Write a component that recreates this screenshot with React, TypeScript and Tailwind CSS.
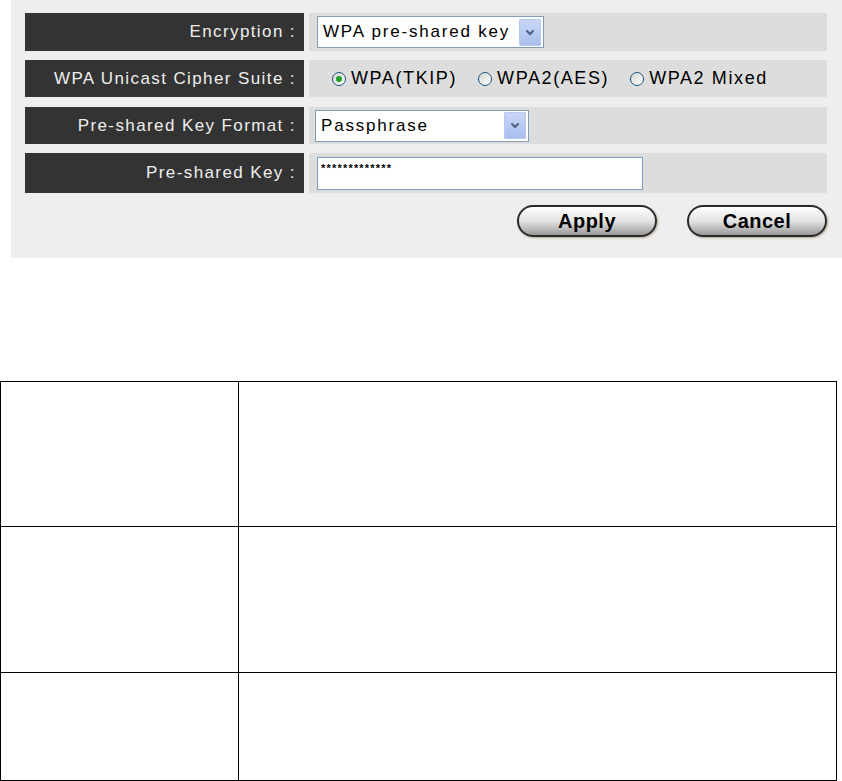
import React from 'react'

const font = { fontFamily: '"Liberation Sans", Arial, sans-serif' }

function Label({ text }: { text: string }) {
  return (
    <div className="w-[279px] shrink-0 bg-[#333333] text-[#eeeeee] text-[17px] tracking-[1.4px] flex items-center justify-end pr-[8px]">
      {text}
    </div>
  )
}

function Arrow() {
  return (
    <div className="w-[22px] h-[27px] my-auto mr-[2px] bg-gradient-to-b from-[#c9d6f7] to-[#a9bff0] flex items-center justify-center border border-[#b8c8ee] rounded-[1px]">
      <svg width="10" height="7" viewBox="0 0 10 7">
        <path d="M1.5 1.5 L5 5 L8.5 1.5" stroke="#4d6185" strokeWidth="2" fill="none" />
      </svg>
    </div>
  )
}

function Select({ value, width }: { value: string; width: string }) {
  return (
    <div className={`${width} h-[32px] bg-white border border-[#7f9db9] flex items-stretch`}>
      <span className="flex-1 pl-[5px] text-[17px] tracking-[1.8px] text-black flex items-center">{value}</span>
      <Arrow />
    </div>
  )
}

function Radio({ label, checked }: { label: string; checked?: boolean }) {
  return (
    <span className="flex items-center gap-[5px] text-[18px] tracking-[1.6px] text-black">
      <span className="w-[14px] h-[14px] rounded-full border border-[#1c5180] bg-gradient-to-br from-[#d6d6d0] to-white flex items-center justify-center">
        {checked && <span className="w-[6px] h-[6px] rounded-full bg-[#21a121]" />}
      </span>
      {label}
    </span>
  )
}

function PillButton({ text }: { text: string }) {
  return (
    <button className="w-[140px] h-[32px] rounded-full border-[2px] border-[#2a2a2a] bg-gradient-to-b from-[#ffffff] via-[#e4e4e4] to-[#9a9a9a] shadow-[1px_1px_2px_#b8a898] text-[20px] tracking-[0.5px] font-bold text-black flex items-center justify-center">
      {text}
    </button>
  )
}

export default function App() {
  return (
    <div className="w-[842px] h-[781px] bg-white" style={font}>
      <div className="ml-[11px] h-[258px] bg-[#eeeeee] pt-[13px] pl-[14px] pr-[15px]">
        <div className="flex gap-[5px] h-[38px] mb-[9px]">
          <Label text="Encryption :" />
          <div className="flex-1 bg-[#dddddd] flex items-center pl-[8px]">
            <Select value="WPA pre-shared key" width="w-[227px]" />
          </div>
        </div>
        <div className="flex gap-[5px] h-[37px] mb-[10px]">
          <Label text="WPA Unicast Cipher Suite :" />
          <div className="flex-1 bg-[#dddddd] flex items-center pl-[23px] gap-[21px]">
            <Radio label="WPA(TKIP)" checked />
            <Radio label="WPA2(AES)" />
            <Radio label="WPA2 Mixed" />
          </div>
        </div>
        <div className="flex gap-[5px] h-[37px] mb-[9px]">
          <Label text="Pre-shared Key Format :" />
          <div className="flex-1 bg-[#dddddd] flex items-center pl-[6px]">
            <Select value="Passphrase" width="w-[214px]" />
          </div>
        </div>
        <div className="flex gap-[5px] h-[40px]">
          <Label text="Pre-shared Key :" />
          <div className="flex-1 bg-[#dddddd] flex items-center pl-[8px]">
            <div className="w-[326px] h-[33px] bg-white border border-[#7f9db9] pl-[3px] pt-[4px] text-[11px] leading-[12px] font-bold text-black tracking-[1.2px]">
              *************
            </div>
          </div>
        </div>
        <div className="flex justify-end gap-[30px] mt-[12px]">
          <PillButton text="Apply" />
          <PillButton text="Cancel" />
        </div>
      </div>
      <div className="mt-[123px] w-[837px] border border-black grid grid-cols-[238px_1fr]">
        <div className="h-[145px] border-r border-b border-black" />
        <div className="h-[145px] border-b border-black" />
        <div className="h-[146px] border-r border-b border-black" />
        <div className="h-[146px] border-b border-black" />
        <div className="h-[107px] border-r border-black" />
        <div className="h-[107px]" />
      </div>
    </div>
  )
}
